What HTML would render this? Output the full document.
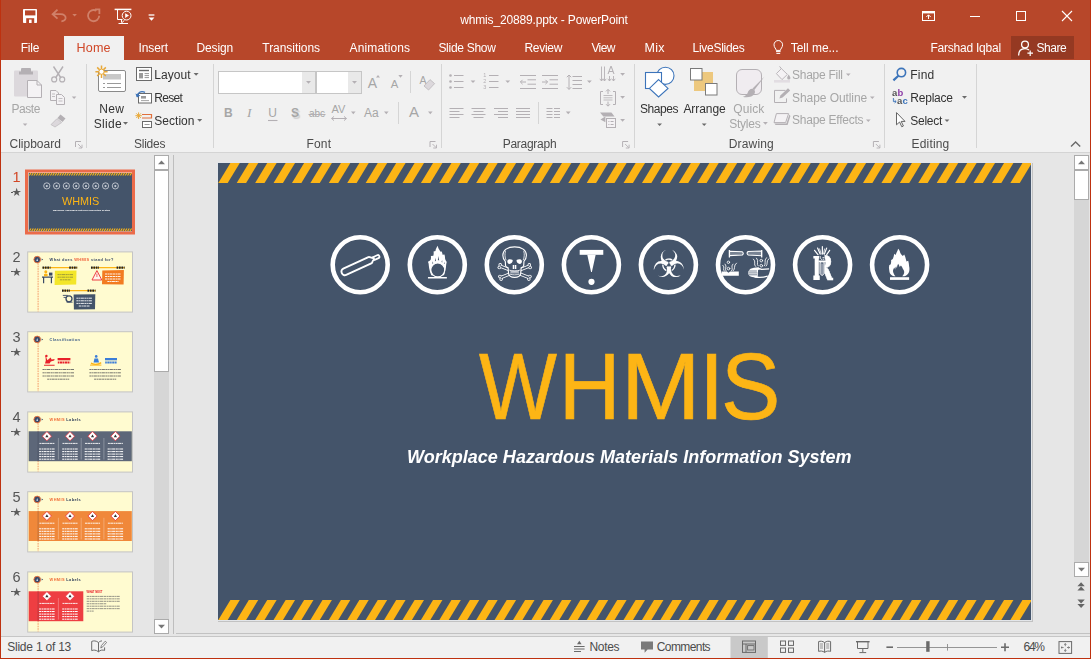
<!DOCTYPE html>
<html><head><meta charset="utf-8"><title>whmis_20889.pptx - PowerPoint</title>
<style>
*{box-sizing:border-box;margin:0;padding:0}
html,body{width:1091px;height:659px;overflow:hidden}
body{position:relative;background:#be310f;font-family:"Liberation Sans",sans-serif;font-size:12px;color:#444}
.a{position:absolute}
.t{position:absolute;white-space:nowrap;line-height:14px}
.w{color:#fff}
.d{color:#a6a6a6}
.k{color:#333}
.g{color:#4c4c4c}
#ribbon{left:1px;top:60px;width:1089px;height:92px;background:#f1f1f1}
#work{left:1px;top:152px;width:1089px;height:484px;background:#e6e6e6;border-top:1px solid #d4d4d4}
#status{left:1px;top:636px;width:1089px;height:22px;background:#f1f1f1;border-top:1px solid #c6c6c6}
.sep{position:absolute;width:1px;background:#d5d5d5;top:64px;height:84px}
svg{position:absolute;overflow:visible}
#whmis span{position:absolute;top:0;transform-origin:0 0;display:block}
.num{position:absolute;left:6px;width:20px;text-align:center;font-size:16px;line-height:18px;color:#555}
.th{position:absolute;left:27px;width:106px;height:61px;border:1px solid #c8c8c8;background:#fffbd0;overflow:hidden}
</style></head><body>
<!-- TITLE BAR -->
<div class="a" style="left:1px;top:0;width:1089px;height:60px;background:#b7472a"></div>
<!-- TABS -->
<div class="a" style="left:64px;top:36px;width:60px;height:25px;background:#f1f1f1"></div>
<div class="a" style="left:1011px;top:36px;width:63px;height:23px;background:#953922"></div>
<!-- RIBBON -->
<div class="a" id="ribbon"></div>
<div class="sep" style="left:86px"></div>
<div class="sep" style="left:213px"></div>
<div class="sep" style="left:441px"></div>
<div class="sep" style="left:634px"></div>
<div class="sep" style="left:884px"></div>
<div class="sep" style="left:976px"></div>
<div class="sep" style="left:410px;top:71px;height:22px"></div>
<div class="sep" style="left:398px;top:102px;height:22px"></div>
<div class="sep" style="left:538px;top:102px;height:22px"></div>
<!-- clipboard -->
<!-- slides -->
<!-- font -->
<div class="a" style="left:218px;top:71px;width:98px;height:23px;background:#fff;border:1px solid #c6c6c6"></div>
<div class="a" style="left:302px;top:72px;width:13px;height:21px;background:#e9e9e9"></div>
<div class="a" style="left:316px;top:71px;width:46px;height:23px;background:#fff;border:1px solid #c6c6c6"></div>
<div class="a" style="left:348px;top:72px;width:13px;height:21px;background:#e9e9e9"></div>
<div class="t d" style="left:367.8px;top:75.8px;font-size:14px">A</div>
<div class="t d" style="left:390.8px;top:77.1px;font-size:11.3px">A</div>
<div class="t d" style="left:419.6px;top:73px;font-size:10.5px">A</div>
<div class="t d" style="left:224px;top:106.3px;font-weight:bold">B</div>
<div class="t d" style="left:247px;top:106px;font-family:'Liberation Serif',serif;font-style:italic;font-size:13.5px">I</div>
<div class="t d" style="left:268.2px;top:106.3px">U</div>
<div class="t d" style="left:291px;top:106.3px;font-weight:bold;text-shadow:1.5px 1.5px 1px #cfcfcf">S</div>
<div class="t d" style="left:309px;top:107px;font-size:10px">abc</div>
<div class="t d" style="left:331.6px;top:101.6px;font-size:11px">AV</div>
<div class="t d" style="left:364px;top:106.3px">Aa</div>
<div class="t d" style="left:409px;top:105.3px;font-size:15px">A</div>
<!-- paragraph -->
<!-- drawing -->
<!-- editing -->
<!-- WORKSPACE -->
<div class="a" id="work"></div>
<svg width="1091" height="659" viewBox="0 0 1091 659" style="left:0;top:0;will-change:transform"><rect x="25" y="169.5" width="110" height="65" fill="#eb6b4a"/>
<rect x="28" y="172.5" width="104" height="59" fill="#fbe3d6"/>
<rect x="28.7" y="173" width="103.3" height="58.2" fill="#44546a"/>
<rect x="27.7" y="251.9" width="104.8" height="60.2" fill="#fffbd0" stroke="#c4c4c4" stroke-width="1"/>
<rect x="27.7" y="331.7" width="104.8" height="60.2" fill="#fffbd0" stroke="#c4c4c4" stroke-width="1"/>
<rect x="27.7" y="411.9" width="104.8" height="60.2" fill="#fffbd0" stroke="#c4c4c4" stroke-width="1"/>
<rect x="27.7" y="491.7" width="104.8" height="60.2" fill="#fffbd0" stroke="#c4c4c4" stroke-width="1"/>
<rect x="27.7" y="571.9" width="104.8" height="60.2" fill="#fffbd0" stroke="#c4c4c4" stroke-width="1"/>
<clipPath id="c1"><rect x="28.7" y="173" width="103.3" height="58.2"/></clipPath><g clip-path="url(#c1)">
<path d="M28.70,175.6 l1.3,0 l1.5,-2.6 l-1.3,0z M31.04,175.6 l1.3,0 l1.5,-2.6 l-1.3,0z M33.38,175.6 l1.3,0 l1.5,-2.6 l-1.3,0z M35.72,175.6 l1.3,0 l1.5,-2.6 l-1.3,0z M38.06,175.6 l1.3,0 l1.5,-2.6 l-1.3,0z M40.40,175.6 l1.3,0 l1.5,-2.6 l-1.3,0z M42.74,175.6 l1.3,0 l1.5,-2.6 l-1.3,0z M45.08,175.6 l1.3,0 l1.5,-2.6 l-1.3,0z M47.42,175.6 l1.3,0 l1.5,-2.6 l-1.3,0z M49.76,175.6 l1.3,0 l1.5,-2.6 l-1.3,0z M52.10,175.6 l1.3,0 l1.5,-2.6 l-1.3,0z M54.44,175.6 l1.3,0 l1.5,-2.6 l-1.3,0z M56.78,175.6 l1.3,0 l1.5,-2.6 l-1.3,0z M59.12,175.6 l1.3,0 l1.5,-2.6 l-1.3,0z M61.46,175.6 l1.3,0 l1.5,-2.6 l-1.3,0z M63.80,175.6 l1.3,0 l1.5,-2.6 l-1.3,0z M66.14,175.6 l1.3,0 l1.5,-2.6 l-1.3,0z M68.48,175.6 l1.3,0 l1.5,-2.6 l-1.3,0z M70.82,175.6 l1.3,0 l1.5,-2.6 l-1.3,0z M73.16,175.6 l1.3,0 l1.5,-2.6 l-1.3,0z M75.50,175.6 l1.3,0 l1.5,-2.6 l-1.3,0z M77.84,175.6 l1.3,0 l1.5,-2.6 l-1.3,0z M80.18,175.6 l1.3,0 l1.5,-2.6 l-1.3,0z M82.52,175.6 l1.3,0 l1.5,-2.6 l-1.3,0z M84.86,175.6 l1.3,0 l1.5,-2.6 l-1.3,0z M87.20,175.6 l1.3,0 l1.5,-2.6 l-1.3,0z M89.54,175.6 l1.3,0 l1.5,-2.6 l-1.3,0z M91.88,175.6 l1.3,0 l1.5,-2.6 l-1.3,0z M94.22,175.6 l1.3,0 l1.5,-2.6 l-1.3,0z M96.56,175.6 l1.3,0 l1.5,-2.6 l-1.3,0z M98.90,175.6 l1.3,0 l1.5,-2.6 l-1.3,0z M101.24,175.6 l1.3,0 l1.5,-2.6 l-1.3,0z M103.58,175.6 l1.3,0 l1.5,-2.6 l-1.3,0z M105.92,175.6 l1.3,0 l1.5,-2.6 l-1.3,0z M108.26,175.6 l1.3,0 l1.5,-2.6 l-1.3,0z M110.60,175.6 l1.3,0 l1.5,-2.6 l-1.3,0z M112.94,175.6 l1.3,0 l1.5,-2.6 l-1.3,0z M115.28,175.6 l1.3,0 l1.5,-2.6 l-1.3,0z M117.62,175.6 l1.3,0 l1.5,-2.6 l-1.3,0z M119.96,175.6 l1.3,0 l1.5,-2.6 l-1.3,0z M122.30,175.6 l1.3,0 l1.5,-2.6 l-1.3,0z M124.64,175.6 l1.3,0 l1.5,-2.6 l-1.3,0z M126.98,175.6 l1.3,0 l1.5,-2.6 l-1.3,0z M129.32,175.6 l1.3,0 l1.5,-2.6 l-1.3,0z M131.66,175.6 l1.3,0 l1.5,-2.6 l-1.3,0z" fill="#fdb515"/>
<path d="M28.70,231.2 l1.3,0 l1.5,-2.6 l-1.3,0z M31.04,231.2 l1.3,0 l1.5,-2.6 l-1.3,0z M33.38,231.2 l1.3,0 l1.5,-2.6 l-1.3,0z M35.72,231.2 l1.3,0 l1.5,-2.6 l-1.3,0z M38.06,231.2 l1.3,0 l1.5,-2.6 l-1.3,0z M40.40,231.2 l1.3,0 l1.5,-2.6 l-1.3,0z M42.74,231.2 l1.3,0 l1.5,-2.6 l-1.3,0z M45.08,231.2 l1.3,0 l1.5,-2.6 l-1.3,0z M47.42,231.2 l1.3,0 l1.5,-2.6 l-1.3,0z M49.76,231.2 l1.3,0 l1.5,-2.6 l-1.3,0z M52.10,231.2 l1.3,0 l1.5,-2.6 l-1.3,0z M54.44,231.2 l1.3,0 l1.5,-2.6 l-1.3,0z M56.78,231.2 l1.3,0 l1.5,-2.6 l-1.3,0z M59.12,231.2 l1.3,0 l1.5,-2.6 l-1.3,0z M61.46,231.2 l1.3,0 l1.5,-2.6 l-1.3,0z M63.80,231.2 l1.3,0 l1.5,-2.6 l-1.3,0z M66.14,231.2 l1.3,0 l1.5,-2.6 l-1.3,0z M68.48,231.2 l1.3,0 l1.5,-2.6 l-1.3,0z M70.82,231.2 l1.3,0 l1.5,-2.6 l-1.3,0z M73.16,231.2 l1.3,0 l1.5,-2.6 l-1.3,0z M75.50,231.2 l1.3,0 l1.5,-2.6 l-1.3,0z M77.84,231.2 l1.3,0 l1.5,-2.6 l-1.3,0z M80.18,231.2 l1.3,0 l1.5,-2.6 l-1.3,0z M82.52,231.2 l1.3,0 l1.5,-2.6 l-1.3,0z M84.86,231.2 l1.3,0 l1.5,-2.6 l-1.3,0z M87.20,231.2 l1.3,0 l1.5,-2.6 l-1.3,0z M89.54,231.2 l1.3,0 l1.5,-2.6 l-1.3,0z M91.88,231.2 l1.3,0 l1.5,-2.6 l-1.3,0z M94.22,231.2 l1.3,0 l1.5,-2.6 l-1.3,0z M96.56,231.2 l1.3,0 l1.5,-2.6 l-1.3,0z M98.90,231.2 l1.3,0 l1.5,-2.6 l-1.3,0z M101.24,231.2 l1.3,0 l1.5,-2.6 l-1.3,0z M103.58,231.2 l1.3,0 l1.5,-2.6 l-1.3,0z M105.92,231.2 l1.3,0 l1.5,-2.6 l-1.3,0z M108.26,231.2 l1.3,0 l1.5,-2.6 l-1.3,0z M110.60,231.2 l1.3,0 l1.5,-2.6 l-1.3,0z M112.94,231.2 l1.3,0 l1.5,-2.6 l-1.3,0z M115.28,231.2 l1.3,0 l1.5,-2.6 l-1.3,0z M117.62,231.2 l1.3,0 l1.5,-2.6 l-1.3,0z M119.96,231.2 l1.3,0 l1.5,-2.6 l-1.3,0z M122.30,231.2 l1.3,0 l1.5,-2.6 l-1.3,0z M124.64,231.2 l1.3,0 l1.5,-2.6 l-1.3,0z M126.98,231.2 l1.3,0 l1.5,-2.6 l-1.3,0z M129.32,231.2 l1.3,0 l1.5,-2.6 l-1.3,0z M131.66,231.2 l1.3,0 l1.5,-2.6 l-1.3,0z" fill="#fdb515"/>
</g>
<circle cx="46.80" cy="185.9" r="3.1" fill="none" stroke="#e8eaee" stroke-width="0.7"/><circle cx="46.80" cy="186.1" r="1.1" fill="#c9ced6"/>
<circle cx="56.59" cy="185.9" r="3.1" fill="none" stroke="#e8eaee" stroke-width="0.7"/><circle cx="56.59" cy="186.1" r="1.1" fill="#c9ced6"/>
<circle cx="66.38" cy="185.9" r="3.1" fill="none" stroke="#e8eaee" stroke-width="0.7"/><circle cx="66.38" cy="186.1" r="1.1" fill="#c9ced6"/>
<circle cx="76.17" cy="185.9" r="3.1" fill="none" stroke="#e8eaee" stroke-width="0.7"/><circle cx="76.17" cy="186.1" r="1.1" fill="#c9ced6"/>
<circle cx="85.96" cy="185.9" r="3.1" fill="none" stroke="#e8eaee" stroke-width="0.7"/><circle cx="85.96" cy="186.1" r="1.1" fill="#c9ced6"/>
<circle cx="95.75" cy="185.9" r="3.1" fill="none" stroke="#e8eaee" stroke-width="0.7"/><circle cx="95.75" cy="186.1" r="1.1" fill="#c9ced6"/>
<circle cx="105.54" cy="185.9" r="3.1" fill="none" stroke="#e8eaee" stroke-width="0.7"/><circle cx="105.54" cy="186.1" r="1.1" fill="#c9ced6"/>
<circle cx="115.33" cy="185.9" r="3.1" fill="none" stroke="#e8eaee" stroke-width="0.7"/><circle cx="115.33" cy="186.1" r="1.1" fill="#c9ced6"/>
<text x="80.6" y="205.3" text-anchor="middle" font-family="Liberation Sans,sans-serif" font-size="11.4" fill="#fdb515" textLength="37.4" lengthAdjust="spacingAndGlyphs">WHMIS</text>
<text x="81.4" y="210.9" text-anchor="middle" font-family="Liberation Sans,sans-serif" font-size="2.35" font-weight="bold" font-style="italic" fill="#fff">Workplace Hazardous Materials Information System</text>
<path d="M38.1,263.20000000000005 V311.4" stroke="#f0703a" stroke-width="0.7" stroke-dasharray="1.6,0.9"/>
<circle cx="37.2" cy="259.6" r="3.3" fill="#3a4a66" stroke="#f0703a" stroke-width="0.9"/><path d="M36.3,261.0 h1.8 l-0.9,-2.8z" fill="#cfe0ff"/><path d="M41.6,258.6 l1.6,1 l-1.6,1z" fill="#3a4a66"/>
<text x="49.6" y="261.0" font-family="Liberation Sans,sans-serif" font-size="3.9" font-weight="bold" letter-spacing="0.38"><tspan fill="#3a4a66">What does </tspan><tspan fill="#f0603a">WHMIS </tspan><tspan fill="#3a4a66">stand for?</tspan></text>
<path d="M42.5,267.7 h34.7" stroke="#fdb515" stroke-width="1.3"/><path d="M42.5,267.7 h8 M69.2,267.7 h8" stroke="#222" stroke-width="2.2" stroke-dasharray="1.7,0.7"/>
<path d="M91,267.7 h33.6" stroke="#fdb515" stroke-width="1.3"/><path d="M91,267.7 h8 M116.6,267.7 h8" stroke="#222" stroke-width="2.2" stroke-dasharray="1.7,0.7"/>
<path d="M62,290.7 h33.5" stroke="#fdb515" stroke-width="1.3"/><path d="M62,290.7 h8 M87.5,290.7 h8" stroke="#222" stroke-width="2.2" stroke-dasharray="1.7,0.7"/>
<path d="M54.9,270.8 L76.5,270.4 L76.2,284.4 L54.6,284.9Z" fill="#f3e62a"/>
<path d="M57.5,274.6 h16.0" stroke="#8a8a3a" stroke-width="0.8" stroke-dasharray="2.2,0.5,1.4,0.4,3,0.5"/>
<path d="M57.5,277.2 h16.0" stroke="#8a8a3a" stroke-width="0.8" stroke-dasharray="2.2,0.5,1.4,0.4,3,0.5"/>
<path d="M59.9,279.8 h11.2" stroke="#8a8a3a" stroke-width="0.8" stroke-dasharray="2.2,0.5,1.4,0.4,3,0.5"/>
<path d="M42,276.4 h11 v1.3 h-1 v5.6 h-1.2 v-5.6 h-6.6 v5.6 h-1.2 v-5.6 h-1z" fill="#3a4a66"/><circle cx="45.8" cy="271.8" r="1.5" fill="#fdb515"/><path d="M44,276.2 v-2 q1.8,-1.6 3.6,0 v2z" fill="#fdb515"/><rect x="49" y="272.6" width="3.4" height="3" fill="#3a4a66"/>
<path d="M96.9,270.6 L101.8,280 H92 Z" fill="#fff3ea" stroke="#ee3e42" stroke-width="1"/><path d="M96.9,273.6 v3.4" stroke="#ee3e42" stroke-width="0.8"/>
<path d="M102.3,270.4 L123.9,270 L123.6,284.6 L102,284.2Z" fill="#f27b21"/>
<path d="M105.0,274.0 h16.0" stroke="#fff" stroke-width="0.9" stroke-dasharray="2.2,0.5,1.4,0.4,3,0.5"/>
<path d="M105.0,276.5 h16.0" stroke="#fff" stroke-width="0.9" stroke-dasharray="2.2,0.5,1.4,0.4,3,0.5"/>
<path d="M105.0,279.0 h16.0" stroke="#fff" stroke-width="0.9" stroke-dasharray="2.2,0.5,1.4,0.4,3,0.5"/>
<path d="M107.4,281.5 h11.2" stroke="#fff" stroke-width="0.9" stroke-dasharray="2.2,0.5,1.4,0.4,3,0.5"/>
<path d="M73.6,294.6 L95.3,294.2 L95,309.2 L73.9,309.5Z" fill="#44546a"/>
<path d="M76.4,298.2 h16.0" stroke="#fff" stroke-width="0.9" stroke-dasharray="2.2,0.5,1.4,0.4,3,0.5"/>
<path d="M76.4,300.8 h16.0" stroke="#fff" stroke-width="0.9" stroke-dasharray="2.2,0.5,1.4,0.4,3,0.5"/>
<path d="M76.4,303.4 h16.0" stroke="#fff" stroke-width="0.9" stroke-dasharray="2.2,0.5,1.4,0.4,3,0.5"/>
<path d="M78.8,306.0 h11.2" stroke="#fff" stroke-width="0.9" stroke-dasharray="2.2,0.5,1.4,0.4,3,0.5"/>
<circle cx="69" cy="298.8" r="3" fill="none" stroke="#3a4a66" stroke-width="1.3"/><path d="M62.8,295.4 h5 M63.6,297.4 h3 M66.6,302.2 h6" stroke="#3a4a66" stroke-width="0.9"/>
<path d="M38.1,343.0 V391.2" stroke="#f0703a" stroke-width="0.7" stroke-dasharray="1.6,0.9"/>
<circle cx="37.2" cy="339.4" r="3.3" fill="#3a4a66" stroke="#f0703a" stroke-width="0.9"/><path d="M36.3,340.79999999999995 h1.8 l-0.9,-2.8z" fill="#cfe0ff"/><path d="M41.6,338.4 l1.6,1 l-1.6,1z" fill="#3a4a66"/>
<text x="49.6" y="340.79999999999995" font-family="Liberation Sans,sans-serif" font-size="3.9" font-weight="bold" letter-spacing="0.38"><tspan fill="#3a5a86">Classification</tspan></text>
<path d="M44,364.8 h10.6 v0.9 h-10.6z M45.4,355.2 l2,5 l3.2,-2.6 l1,2 l3,-0.6 l-0.4,1.6 l-3.4,1 l-1.2,2 h-4.6 l0.8,-3z" fill="#e8202a"/><circle cx="46.4" cy="356" r="1.2" fill="#e8202a"/>
<rect x="57.6" y="358" width="12.8" height="2.3" fill="#e8202a"/><path d="M57.8,362.4 h12.4" stroke="#e8202a" stroke-width="2" stroke-dasharray="1.6,0.5,2.4,0.4"/>
<path d="M90,364.6 h11.4 v1 h-11.4z" fill="#fdb515"/><path d="M91,362.6 q5,2.4 10,-0.6 l0.4,1.4 q-5,3 -10.6,0.6z" fill="#fdb515"/><path d="M94.4,358.4 h3.6 l1,4 h-5.4z" fill="#3b7dd8"/><circle cx="96.2" cy="356.4" r="1.3" fill="#3b7dd8"/>
<rect x="105" y="358" width="12" height="2.3" fill="#3b7dd8"/><path d="M105.2,362.4 h11.6" stroke="#3b7dd8" stroke-width="2" stroke-dasharray="1.6,0.5,2.4,0.4"/>
<path d="M42.5,369.5 h31.5" stroke="#555" stroke-width="0.8" stroke-dasharray="2.2,0.5,1.4,0.4,3,0.5"/>
<path d="M42.5,372.8 h31.5" stroke="#555" stroke-width="0.8" stroke-dasharray="2.2,0.5,1.4,0.4,3,0.5"/>
<path d="M42.5,376.0 h31.5" stroke="#555" stroke-width="0.8" stroke-dasharray="2.2,0.5,1.4,0.4,3,0.5"/>
<path d="M47.2,379.2 h22.0" stroke="#555" stroke-width="0.8" stroke-dasharray="2.2,0.5,1.4,0.4,3,0.5"/>
<path d="M89.4,369.5 h31.6" stroke="#555" stroke-width="0.8" stroke-dasharray="2.2,0.5,1.4,0.4,3,0.5"/>
<path d="M89.4,372.8 h31.6" stroke="#555" stroke-width="0.8" stroke-dasharray="2.2,0.5,1.4,0.4,3,0.5"/>
<path d="M89.4,376.0 h31.6" stroke="#555" stroke-width="0.8" stroke-dasharray="2.2,0.5,1.4,0.4,3,0.5"/>
<path d="M94.1,379.2 h22.1" stroke="#555" stroke-width="0.8" stroke-dasharray="2.2,0.5,1.4,0.4,3,0.5"/>
<path d="M38.1,423.2 V471.4" stroke="#f0703a" stroke-width="0.7" stroke-dasharray="1.6,0.9"/>
<circle cx="37.2" cy="419.59999999999997" r="3.3" fill="#3a4a66" stroke="#f0703a" stroke-width="0.9"/><path d="M36.3,420.99999999999994 h1.8 l-0.9,-2.8z" fill="#cfe0ff"/><path d="M41.6,418.59999999999997 l1.6,1 l-1.6,1z" fill="#3a4a66"/>
<text x="49.6" y="420.99999999999994" font-family="Liberation Sans,sans-serif" font-size="3.9" font-weight="bold" letter-spacing="0.38"><tspan fill="#f0703a">WHMIS </tspan><tspan fill="#2a3a56">Labels</tspan></text>
<rect x="28.7" y="431.29999999999995" width="103.10000000000001" height="29.9" fill="#5d6779"/>
<path d="M38.1,431.29999999999995 v29.9" stroke="#2a2a3a" stroke-opacity="0.35" stroke-width="0.7"/>
<path d="M46.9,431.59999999999997 l4.6,4.6 l-4.6,4.6 l-4.6,-4.6z" fill="#fff" stroke="#e8303a" stroke-width="0.8"/><path d="M45.3,437.2 l1.6,-2.8 l1.6,2.8z" fill="#333"/>
<path d="M39.4,443.4 h15" stroke="#fff" stroke-width="0.9" stroke-dasharray="2,0.4,3,0.4,1.6,0.4"/>
<path d="M39.1,449.0 h15.6" stroke="#fff" stroke-width="1.0" stroke-dasharray="2.2,0.5,1.4,0.4,3,0.5"/>
<path d="M39.1,451.6 h15.6" stroke="#fff" stroke-width="1.0" stroke-dasharray="2.2,0.5,1.4,0.4,3,0.5"/>
<path d="M39.1,454.1 h15.6" stroke="#fff" stroke-width="1.0" stroke-dasharray="2.2,0.5,1.4,0.4,3,0.5"/>
<path d="M39.1,456.6 h15.6" stroke="#fff" stroke-width="1.0" stroke-dasharray="2.2,0.5,1.4,0.4,3,0.5"/>
<path d="M39.1,459.2 h15.6" stroke="#fff" stroke-width="1.0" stroke-dasharray="2.2,0.5,1.4,0.4,3,0.5"/>
<path d="M58.4,438.0 v21.6" stroke="#fff" stroke-opacity="0.55" stroke-width="0.5"/>
<path d="M70,431.59999999999997 l4.6,4.6 l-4.6,4.6 l-4.6,-4.6z" fill="#fff" stroke="#e8303a" stroke-width="0.8"/><path d="M68.4,437.2 l1.6,-2.8 l1.6,2.8z" fill="#333"/>
<path d="M62.5,443.4 h15" stroke="#fff" stroke-width="0.9" stroke-dasharray="2,0.4,3,0.4,1.6,0.4"/>
<path d="M62.2,449.0 h15.6" stroke="#fff" stroke-width="1.0" stroke-dasharray="2.2,0.5,1.4,0.4,3,0.5"/>
<path d="M62.2,451.6 h15.6" stroke="#fff" stroke-width="1.0" stroke-dasharray="2.2,0.5,1.4,0.4,3,0.5"/>
<path d="M62.2,454.1 h15.6" stroke="#fff" stroke-width="1.0" stroke-dasharray="2.2,0.5,1.4,0.4,3,0.5"/>
<path d="M62.2,456.6 h15.6" stroke="#fff" stroke-width="1.0" stroke-dasharray="2.2,0.5,1.4,0.4,3,0.5"/>
<path d="M62.2,459.2 h15.6" stroke="#fff" stroke-width="1.0" stroke-dasharray="2.2,0.5,1.4,0.4,3,0.5"/>
<path d="M81.2,438.0 v21.6" stroke="#fff" stroke-opacity="0.55" stroke-width="0.5"/>
<path d="M92.5,431.59999999999997 l4.6,4.6 l-4.6,4.6 l-4.6,-4.6z" fill="#fff" stroke="#e8303a" stroke-width="0.8"/><path d="M90.9,437.2 l1.6,-2.8 l1.6,2.8z" fill="#333"/>
<path d="M85.0,443.4 h15" stroke="#fff" stroke-width="0.9" stroke-dasharray="2,0.4,3,0.4,1.6,0.4"/>
<path d="M84.7,449.0 h15.6" stroke="#fff" stroke-width="1.0" stroke-dasharray="2.2,0.5,1.4,0.4,3,0.5"/>
<path d="M84.7,451.6 h15.6" stroke="#fff" stroke-width="1.0" stroke-dasharray="2.2,0.5,1.4,0.4,3,0.5"/>
<path d="M84.7,454.1 h15.6" stroke="#fff" stroke-width="1.0" stroke-dasharray="2.2,0.5,1.4,0.4,3,0.5"/>
<path d="M84.7,456.6 h15.6" stroke="#fff" stroke-width="1.0" stroke-dasharray="2.2,0.5,1.4,0.4,3,0.5"/>
<path d="M84.7,459.2 h15.6" stroke="#fff" stroke-width="1.0" stroke-dasharray="2.2,0.5,1.4,0.4,3,0.5"/>
<path d="M103.9,438.0 v21.6" stroke="#fff" stroke-opacity="0.55" stroke-width="0.5"/>
<path d="M115.4,431.59999999999997 l4.6,4.6 l-4.6,4.6 l-4.6,-4.6z" fill="#fff" stroke="#e8303a" stroke-width="0.8"/><path d="M113.80000000000001,437.2 l1.6,-2.8 l1.6,2.8z" fill="#333"/>
<path d="M107.9,443.4 h15" stroke="#fff" stroke-width="0.9" stroke-dasharray="2,0.4,3,0.4,1.6,0.4"/>
<path d="M107.6,449.0 h15.6" stroke="#fff" stroke-width="1.0" stroke-dasharray="2.2,0.5,1.4,0.4,3,0.5"/>
<path d="M107.6,451.6 h15.6" stroke="#fff" stroke-width="1.0" stroke-dasharray="2.2,0.5,1.4,0.4,3,0.5"/>
<path d="M107.6,454.1 h15.6" stroke="#fff" stroke-width="1.0" stroke-dasharray="2.2,0.5,1.4,0.4,3,0.5"/>
<path d="M107.6,456.6 h15.6" stroke="#fff" stroke-width="1.0" stroke-dasharray="2.2,0.5,1.4,0.4,3,0.5"/>
<path d="M107.6,459.2 h15.6" stroke="#fff" stroke-width="1.0" stroke-dasharray="2.2,0.5,1.4,0.4,3,0.5"/>
<path d="M38.1,503.0 V551.2" stroke="#f0703a" stroke-width="0.7" stroke-dasharray="1.6,0.9"/>
<circle cx="37.2" cy="499.4" r="3.3" fill="#3a4a66" stroke="#f0703a" stroke-width="0.9"/><path d="M36.3,500.79999999999995 h1.8 l-0.9,-2.8z" fill="#cfe0ff"/><path d="M41.6,498.4 l1.6,1 l-1.6,1z" fill="#3a4a66"/>
<text x="49.6" y="500.79999999999995" font-family="Liberation Sans,sans-serif" font-size="3.9" font-weight="bold" letter-spacing="0.38"><tspan fill="#f0703a">WHMIS </tspan><tspan fill="#2a3a56">Labels</tspan></text>
<rect x="28.7" y="511.09999999999997" width="103.10000000000001" height="29.9" fill="#f0883a"/>
<path d="M38.1,511.09999999999997 v29.9" stroke="#2a2a3a" stroke-opacity="0.35" stroke-width="0.7"/>
<path d="M46.9,511.4 l4.6,4.6 l-4.6,4.6 l-4.6,-4.6z" fill="#fff" stroke="#e8303a" stroke-width="0.8"/><path d="M45.3,517.0 l1.6,-2.8 l1.6,2.8z" fill="#333"/>
<path d="M39.4,523.2 h15" stroke="#fff" stroke-width="0.9" stroke-dasharray="2,0.4,3,0.4,1.6,0.4"/>
<path d="M39.1,528.8 h15.6" stroke="#fff" stroke-width="1.0" stroke-dasharray="2.2,0.5,1.4,0.4,3,0.5"/>
<path d="M39.1,531.3 h15.6" stroke="#fff" stroke-width="1.0" stroke-dasharray="2.2,0.5,1.4,0.4,3,0.5"/>
<path d="M39.1,533.9 h15.6" stroke="#fff" stroke-width="1.0" stroke-dasharray="2.2,0.5,1.4,0.4,3,0.5"/>
<path d="M39.1,536.4 h15.6" stroke="#fff" stroke-width="1.0" stroke-dasharray="2.2,0.5,1.4,0.4,3,0.5"/>
<path d="M39.1,539.0 h15.6" stroke="#fff" stroke-width="1.0" stroke-dasharray="2.2,0.5,1.4,0.4,3,0.5"/>
<path d="M58.4,517.8 v21.6" stroke="#fff" stroke-opacity="0.55" stroke-width="0.5"/>
<path d="M70,511.4 l4.6,4.6 l-4.6,4.6 l-4.6,-4.6z" fill="#fff" stroke="#e8303a" stroke-width="0.8"/><path d="M68.4,517.0 l1.6,-2.8 l1.6,2.8z" fill="#333"/>
<path d="M62.5,523.2 h15" stroke="#fff" stroke-width="0.9" stroke-dasharray="2,0.4,3,0.4,1.6,0.4"/>
<path d="M62.2,528.8 h15.6" stroke="#fff" stroke-width="1.0" stroke-dasharray="2.2,0.5,1.4,0.4,3,0.5"/>
<path d="M62.2,531.3 h15.6" stroke="#fff" stroke-width="1.0" stroke-dasharray="2.2,0.5,1.4,0.4,3,0.5"/>
<path d="M62.2,533.9 h15.6" stroke="#fff" stroke-width="1.0" stroke-dasharray="2.2,0.5,1.4,0.4,3,0.5"/>
<path d="M62.2,536.4 h15.6" stroke="#fff" stroke-width="1.0" stroke-dasharray="2.2,0.5,1.4,0.4,3,0.5"/>
<path d="M62.2,539.0 h15.6" stroke="#fff" stroke-width="1.0" stroke-dasharray="2.2,0.5,1.4,0.4,3,0.5"/>
<path d="M81.2,517.8 v21.6" stroke="#fff" stroke-opacity="0.55" stroke-width="0.5"/>
<path d="M92.5,511.4 l4.6,4.6 l-4.6,4.6 l-4.6,-4.6z" fill="#fff" stroke="#e8303a" stroke-width="0.8"/><path d="M90.9,517.0 l1.6,-2.8 l1.6,2.8z" fill="#333"/>
<path d="M85.0,523.2 h15" stroke="#fff" stroke-width="0.9" stroke-dasharray="2,0.4,3,0.4,1.6,0.4"/>
<path d="M84.7,528.8 h15.6" stroke="#fff" stroke-width="1.0" stroke-dasharray="2.2,0.5,1.4,0.4,3,0.5"/>
<path d="M84.7,531.3 h15.6" stroke="#fff" stroke-width="1.0" stroke-dasharray="2.2,0.5,1.4,0.4,3,0.5"/>
<path d="M84.7,533.9 h15.6" stroke="#fff" stroke-width="1.0" stroke-dasharray="2.2,0.5,1.4,0.4,3,0.5"/>
<path d="M84.7,536.4 h15.6" stroke="#fff" stroke-width="1.0" stroke-dasharray="2.2,0.5,1.4,0.4,3,0.5"/>
<path d="M84.7,539.0 h15.6" stroke="#fff" stroke-width="1.0" stroke-dasharray="2.2,0.5,1.4,0.4,3,0.5"/>
<path d="M103.9,517.8 v21.6" stroke="#fff" stroke-opacity="0.55" stroke-width="0.5"/>
<path d="M115.4,511.4 l4.6,4.6 l-4.6,4.6 l-4.6,-4.6z" fill="#fff" stroke="#e8303a" stroke-width="0.8"/><path d="M113.80000000000001,517.0 l1.6,-2.8 l1.6,2.8z" fill="#333"/>
<path d="M107.9,523.2 h15" stroke="#fff" stroke-width="0.9" stroke-dasharray="2,0.4,3,0.4,1.6,0.4"/>
<path d="M107.6,528.8 h15.6" stroke="#fff" stroke-width="1.0" stroke-dasharray="2.2,0.5,1.4,0.4,3,0.5"/>
<path d="M107.6,531.3 h15.6" stroke="#fff" stroke-width="1.0" stroke-dasharray="2.2,0.5,1.4,0.4,3,0.5"/>
<path d="M107.6,533.9 h15.6" stroke="#fff" stroke-width="1.0" stroke-dasharray="2.2,0.5,1.4,0.4,3,0.5"/>
<path d="M107.6,536.4 h15.6" stroke="#fff" stroke-width="1.0" stroke-dasharray="2.2,0.5,1.4,0.4,3,0.5"/>
<path d="M107.6,539.0 h15.6" stroke="#fff" stroke-width="1.0" stroke-dasharray="2.2,0.5,1.4,0.4,3,0.5"/>
<path d="M38.1,583.2 V631.4" stroke="#f0703a" stroke-width="0.7" stroke-dasharray="1.6,0.9"/>
<circle cx="37.2" cy="579.6" r="3.3" fill="#3a4a66" stroke="#f0703a" stroke-width="0.9"/><path d="M36.3,581.0 h1.8 l-0.9,-2.8z" fill="#cfe0ff"/><path d="M41.6,578.6 l1.6,1 l-1.6,1z" fill="#3a4a66"/>
<text x="49.6" y="581.0" font-family="Liberation Sans,sans-serif" font-size="3.9" font-weight="bold" letter-spacing="0.38"><tspan fill="#f0703a">WHMIS </tspan><tspan fill="#2a3a56">Labels</tspan></text>
<rect x="28.7" y="591.3" width="54.599999999999994" height="29.9" fill="#ee3e42"/>
<path d="M38.1,591.3 v29.9" stroke="#2a2a3a" stroke-opacity="0.35" stroke-width="0.7"/>
<path d="M46.9,591.5999999999999 l4.6,4.6 l-4.6,4.6 l-4.6,-4.6z" fill="#fff" stroke="#e8303a" stroke-width="0.8"/><path d="M45.3,597.1999999999999 l1.6,-2.8 l1.6,2.8z" fill="#333"/>
<path d="M39.4,603.4 h15" stroke="#fff" stroke-width="0.9" stroke-dasharray="2,0.4,3,0.4,1.6,0.4"/>
<path d="M39.1,609.0 h15.6" stroke="#fff" stroke-width="1.0" stroke-dasharray="2.2,0.5,1.4,0.4,3,0.5"/>
<path d="M39.1,611.5 h15.6" stroke="#fff" stroke-width="1.0" stroke-dasharray="2.2,0.5,1.4,0.4,3,0.5"/>
<path d="M39.1,614.1 h15.6" stroke="#fff" stroke-width="1.0" stroke-dasharray="2.2,0.5,1.4,0.4,3,0.5"/>
<path d="M39.1,616.6 h15.6" stroke="#fff" stroke-width="1.0" stroke-dasharray="2.2,0.5,1.4,0.4,3,0.5"/>
<path d="M39.1,619.2 h15.6" stroke="#fff" stroke-width="1.0" stroke-dasharray="2.2,0.5,1.4,0.4,3,0.5"/>
<path d="M58.4,598.0 v21.6" stroke="#fff" stroke-opacity="0.55" stroke-width="0.5"/>
<path d="M70,591.5999999999999 l4.6,4.6 l-4.6,4.6 l-4.6,-4.6z" fill="#fff" stroke="#e8303a" stroke-width="0.8"/><path d="M68.4,597.1999999999999 l1.6,-2.8 l1.6,2.8z" fill="#333"/>
<path d="M62.5,603.4 h15" stroke="#fff" stroke-width="0.9" stroke-dasharray="2,0.4,3,0.4,1.6,0.4"/>
<path d="M62.2,609.0 h15.6" stroke="#fff" stroke-width="1.0" stroke-dasharray="2.2,0.5,1.4,0.4,3,0.5"/>
<path d="M62.2,611.5 h15.6" stroke="#fff" stroke-width="1.0" stroke-dasharray="2.2,0.5,1.4,0.4,3,0.5"/>
<path d="M62.2,614.1 h15.6" stroke="#fff" stroke-width="1.0" stroke-dasharray="2.2,0.5,1.4,0.4,3,0.5"/>
<path d="M62.2,616.6 h15.6" stroke="#fff" stroke-width="1.0" stroke-dasharray="2.2,0.5,1.4,0.4,3,0.5"/>
<path d="M62.2,619.2 h15.6" stroke="#fff" stroke-width="1.0" stroke-dasharray="2.2,0.5,1.4,0.4,3,0.5"/>
<text x="86.6" y="593.3" font-family="Liberation Sans,sans-serif" font-size="2.7" font-weight="bold" fill="#e8202a">WHAT NEXT</text>
<path d="M86.7,596.40 h33" stroke="#666" stroke-width="0.7" stroke-dasharray="2.4,0.5,1.5,0.4,3.2,0.5"/>
<path d="M86.7,598.85 h33" stroke="#666" stroke-width="0.7" stroke-dasharray="2.4,0.5,1.5,0.4,3.2,0.5"/>
<path d="M86.7,601.30 h33" stroke="#666" stroke-width="0.7" stroke-dasharray="2.4,0.5,1.5,0.4,3.2,0.5"/>
<path d="M86.7,603.75 h20" stroke="#666" stroke-width="0.7" stroke-dasharray="2.4,0.5,1.5,0.4,3.2,0.5"/>
<path d="M86.7,606.20 h33" stroke="#666" stroke-width="0.7" stroke-dasharray="2.4,0.5,1.5,0.4,3.2,0.5"/>
<path d="M86.7,608.65 h33" stroke="#666" stroke-width="0.7" stroke-dasharray="2.4,0.5,1.5,0.4,3.2,0.5"/>
<path d="M86.7,611.10 h7" stroke="#666" stroke-width="0.7" stroke-dasharray="2.4,0.5,1.5,0.4,3.2,0.5"/>
<rect x="154" y="155" width="15" height="479" fill="#d6d6d6"/>
<rect x="154.5" y="155.5" width="14" height="14" fill="#fff" stroke="#ababab"/>
<path d="M158,164.2 h7 l-3.5,-3.8z" fill="#777"/>
<rect x="154.5" y="170.5" width="14" height="201" fill="#fff" stroke="#ababab"/>
<rect x="154.5" y="619.5" width="14" height="14" fill="#fff" stroke="#ababab"/>
<path d="M158,624.8 h7 l-3.5,3.8z" fill="#777"/>
<path d="M173.5,155 V634" stroke="#bebebe"/><path d="M176,633.5 H1090" stroke="#c2c2c2"/>
<rect x="1074" y="155" width="15" height="422" fill="#d6d6d6"/>
<rect x="1074.5" y="155.5" width="14" height="14" fill="#fff" stroke="#ababab"/>
<path d="M1078,164.2 h7 l-3.5,-3.8z" fill="#777"/>
<rect x="1074.5" y="170.5" width="14" height="29" fill="#fff" stroke="#ababab"/>
<rect x="1074.5" y="562.5" width="14" height="14" fill="#fff" stroke="#ababab"/>
<path d="M1078,567.8 h7 l-3.5,3.8z" fill="#777"/>
<path d="M1077.4,586.2 h7.4 l-3.7,-4z M1077.4,590.6 h7.4 l-3.7,-4z" fill="#666"/><path d="M1077.4,599.6 h7.4 l-3.7,4z M1077.4,604 h7.4 l-3.7,4z" fill="#666"/></svg>
<div class="t" style="left:6px;width:21px;text-align:center;top:168.1px;font-size:14.5px;line-height:18px;color:#d24726">1</div>
<div class="t" style="left:11.4px;top:185.3px;font-family:'DejaVu Sans',sans-serif;font-size:11.5px;line-height:14px;color:#5a5a5a">★</div>
<div class="a" style="left:10.5px;top:191.7px;width:2px;height:1px;background:#5a5a5a"></div>
<div class="t" style="left:6px;width:21px;text-align:center;top:247.8px;font-size:14.5px;line-height:18px;color:#555">2</div>
<div class="t" style="left:11.4px;top:265.0px;font-family:'DejaVu Sans',sans-serif;font-size:11.5px;line-height:14px;color:#5a5a5a">★</div>
<div class="a" style="left:10.5px;top:271.4px;width:2px;height:1px;background:#5a5a5a"></div>
<div class="t" style="left:6px;width:21px;text-align:center;top:327.6px;font-size:14.5px;line-height:18px;color:#555">3</div>
<div class="t" style="left:11.4px;top:344.8px;font-family:'DejaVu Sans',sans-serif;font-size:11.5px;line-height:14px;color:#5a5a5a">★</div>
<div class="a" style="left:10.5px;top:351.2px;width:2px;height:1px;background:#5a5a5a"></div>
<div class="t" style="left:6px;width:21px;text-align:center;top:407.8px;font-size:14.5px;line-height:18px;color:#555">4</div>
<div class="t" style="left:11.4px;top:425.0px;font-family:'DejaVu Sans',sans-serif;font-size:11.5px;line-height:14px;color:#5a5a5a">★</div>
<div class="a" style="left:10.5px;top:431.4px;width:2px;height:1px;background:#5a5a5a"></div>
<div class="t" style="left:6px;width:21px;text-align:center;top:487.6px;font-size:14.5px;line-height:18px;color:#555">5</div>
<div class="t" style="left:11.4px;top:504.8px;font-family:'DejaVu Sans',sans-serif;font-size:11.5px;line-height:14px;color:#5a5a5a">★</div>
<div class="a" style="left:10.5px;top:511.2px;width:2px;height:1px;background:#5a5a5a"></div>
<div class="t" style="left:6px;width:21px;text-align:center;top:567.8px;font-size:14.5px;line-height:18px;color:#555">6</div>
<div class="t" style="left:11.4px;top:585.0px;font-family:'DejaVu Sans',sans-serif;font-size:11.5px;line-height:14px;color:#5a5a5a">★</div>
<div class="a" style="left:10.5px;top:591.4px;width:2px;height:1px;background:#5a5a5a"></div>
<!-- SLIDE -->
<div class="a" style="left:218px;top:163px;width:815px;height:459px;background:#c2c2c2"></div><div class="a" style="left:217px;top:162px;width:815px;height:459px;background:#e3e6ea"></div><div class="a" id="slide" style="left:218px;top:163px;width:813px;height:457px;background:#44546a;overflow:hidden">
<svg width="813" height="457" viewBox="0 0 813 457" style="left:0;top:0;will-change:transform">
<g fill="#fdb515"><polygon points="0.30,20 9.70,20 21.80,0 12.40,0"/><polygon points="18.72,20 28.12,20 40.22,0 30.82,0"/><polygon points="37.14,20 46.54,20 58.64,0 49.24,0"/><polygon points="55.56,20 64.96,20 77.06,0 67.66,0"/><polygon points="73.98,20 83.38,20 95.48,0 86.08,0"/><polygon points="92.40,20 101.80,20 113.90,0 104.50,0"/><polygon points="110.82,20 120.22,20 132.32,0 122.92,0"/><polygon points="129.24,20 138.64,20 150.74,0 141.34,0"/><polygon points="147.66,20 157.06,20 169.16,0 159.76,0"/><polygon points="166.08,20 175.48,20 187.58,0 178.18,0"/><polygon points="184.50,20 193.90,20 206.00,0 196.60,0"/><polygon points="202.92,20 212.32,20 224.42,0 215.02,0"/><polygon points="221.34,20 230.74,20 242.84,0 233.44,0"/><polygon points="239.76,20 249.16,20 261.26,0 251.86,0"/><polygon points="258.18,20 267.58,20 279.68,0 270.28,0"/><polygon points="276.60,20 286.00,20 298.10,0 288.70,0"/><polygon points="295.02,20 304.42,20 316.52,0 307.12,0"/><polygon points="313.44,20 322.84,20 334.94,0 325.54,0"/><polygon points="331.86,20 341.26,20 353.36,0 343.96,0"/><polygon points="350.28,20 359.68,20 371.78,0 362.38,0"/><polygon points="368.70,20 378.10,20 390.20,0 380.80,0"/><polygon points="387.12,20 396.52,20 408.62,0 399.22,0"/><polygon points="405.54,20 414.94,20 427.04,0 417.64,0"/><polygon points="423.96,20 433.36,20 445.46,0 436.06,0"/><polygon points="442.38,20 451.78,20 463.88,0 454.48,0"/><polygon points="460.80,20 470.20,20 482.30,0 472.90,0"/><polygon points="479.22,20 488.62,20 500.72,0 491.32,0"/><polygon points="497.64,20 507.04,20 519.14,0 509.74,0"/><polygon points="516.06,20 525.46,20 537.56,0 528.16,0"/><polygon points="534.48,20 543.88,20 555.98,0 546.58,0"/><polygon points="552.90,20 562.30,20 574.40,0 565.00,0"/><polygon points="571.32,20 580.72,20 592.82,0 583.42,0"/><polygon points="589.74,20 599.14,20 611.24,0 601.84,0"/><polygon points="608.16,20 617.56,20 629.66,0 620.26,0"/><polygon points="626.58,20 635.98,20 648.08,0 638.68,0"/><polygon points="645.00,20 654.40,20 666.50,0 657.10,0"/><polygon points="663.42,20 672.82,20 684.92,0 675.52,0"/><polygon points="681.84,20 691.24,20 703.34,0 693.94,0"/><polygon points="700.26,20 709.66,20 721.76,0 712.36,0"/><polygon points="718.68,20 728.08,20 740.18,0 730.78,0"/><polygon points="737.10,20 746.50,20 758.60,0 749.20,0"/><polygon points="755.52,20 764.92,20 777.02,0 767.62,0"/><polygon points="773.94,20 783.34,20 795.44,0 786.04,0"/><polygon points="792.36,20 801.76,20 813.86,0 804.46,0"/><polygon points="0.30,457 9.70,457 21.80,437 12.40,437"/><polygon points="18.72,457 28.12,457 40.22,437 30.82,437"/><polygon points="37.14,457 46.54,457 58.64,437 49.24,437"/><polygon points="55.56,457 64.96,457 77.06,437 67.66,437"/><polygon points="73.98,457 83.38,457 95.48,437 86.08,437"/><polygon points="92.40,457 101.80,457 113.90,437 104.50,437"/><polygon points="110.82,457 120.22,457 132.32,437 122.92,437"/><polygon points="129.24,457 138.64,457 150.74,437 141.34,437"/><polygon points="147.66,457 157.06,457 169.16,437 159.76,437"/><polygon points="166.08,457 175.48,457 187.58,437 178.18,437"/><polygon points="184.50,457 193.90,457 206.00,437 196.60,437"/><polygon points="202.92,457 212.32,457 224.42,437 215.02,437"/><polygon points="221.34,457 230.74,457 242.84,437 233.44,437"/><polygon points="239.76,457 249.16,457 261.26,437 251.86,437"/><polygon points="258.18,457 267.58,457 279.68,437 270.28,437"/><polygon points="276.60,457 286.00,457 298.10,437 288.70,437"/><polygon points="295.02,457 304.42,457 316.52,437 307.12,437"/><polygon points="313.44,457 322.84,457 334.94,437 325.54,437"/><polygon points="331.86,457 341.26,457 353.36,437 343.96,437"/><polygon points="350.28,457 359.68,457 371.78,437 362.38,437"/><polygon points="368.70,457 378.10,457 390.20,437 380.80,437"/><polygon points="387.12,457 396.52,457 408.62,437 399.22,437"/><polygon points="405.54,457 414.94,457 427.04,437 417.64,437"/><polygon points="423.96,457 433.36,457 445.46,437 436.06,437"/><polygon points="442.38,457 451.78,457 463.88,437 454.48,437"/><polygon points="460.80,457 470.20,457 482.30,437 472.90,437"/><polygon points="479.22,457 488.62,457 500.72,437 491.32,437"/><polygon points="497.64,457 507.04,457 519.14,437 509.74,437"/><polygon points="516.06,457 525.46,457 537.56,437 528.16,437"/><polygon points="534.48,457 543.88,457 555.98,437 546.58,437"/><polygon points="552.90,457 562.30,457 574.40,437 565.00,437"/><polygon points="571.32,457 580.72,457 592.82,437 583.42,437"/><polygon points="589.74,457 599.14,457 611.24,437 601.84,437"/><polygon points="608.16,457 617.56,457 629.66,437 620.26,437"/><polygon points="626.58,457 635.98,457 648.08,437 638.68,437"/><polygon points="645.00,457 654.40,457 666.50,437 657.10,437"/><polygon points="663.42,457 672.82,457 684.92,437 675.52,437"/><polygon points="681.84,457 691.24,457 703.34,437 693.94,437"/><polygon points="700.26,457 709.66,457 721.76,437 712.36,437"/><polygon points="718.68,457 728.08,457 740.18,437 730.78,437"/><polygon points="737.10,457 746.50,457 758.60,437 749.20,437"/><polygon points="755.52,457 764.92,457 777.02,437 767.62,437"/><polygon points="773.94,457 783.34,457 795.44,437 786.04,437"/><polygon points="792.36,457 801.76,457 813.86,437 804.46,437"/></g>
<g fill="none" stroke="#fff" stroke-width="4.6"><circle cx="142.2" cy="101.7" r="27.5"/><circle cx="219.3" cy="101.7" r="27.5"/><circle cx="296.3" cy="101.7" r="27.5"/><circle cx="373.4" cy="101.7" r="27.5"/><circle cx="450.4" cy="101.7" r="27.5"/><circle cx="527.5" cy="101.7" r="27.5"/><circle cx="604.6" cy="101.7" r="27.5"/><circle cx="681.6" cy="101.7" r="27.5"/></g>
<g transform="translate(142.20,101.7) rotate(-24.5)"><path d="M-17,-3.5 H10.6 C12.2,-3.5 12.6,-1.4 13.8,-1.4 H14.6 V1.4 H13.8 C12.6,1.4 12.2,3.5 10.6,3.5 H-17 A3.2,3.2 0 0 1 -20.2,0.3 V-0.3 A3.2,3.2 0 0 1 -17,-3.5 Z" fill="none" stroke="#fff" stroke-width="1.9"/>
<rect x="14.8" y="-1.6" width="6.2" height="3.2" rx="1.6" fill="none" stroke="#fff" stroke-width="1.7"/></g>
<g transform="translate(219.26,101.7) "><path d="M0.2,-18.9 C-0.3,-17.6 -0.9,-16.6 -1.3,-15.8 C-1.7,-15 -1.8,-14.4 -1.7,-13.6 L-3.7,-13.3 C-3.4,-11.6 -3.6,-10.2 -3.9,-9 L-6.4,-8.8 C-6.1,-7.4 -6.3,-6 -6.6,-4.9 C-7.4,-4 -8.2,-3.4 -9.3,-3 C-8.6,-1.6 -8.5,-0.2 -8.4,1.2 C-8.3,2.6 -8,4 -7.7,5.3 C-7.5,6.6 -7.1,7.8 -6.6,8.7 C-6.3,9.6 -6,10.2 -5.6,10.8 L6.7,10.5 C7.2,9.4 7.5,8.4 7.7,7.4 C8.2,5.8 8.5,4.2 8.7,2.6 C8.8,0.6 9,-1.2 9.5,-3 C8.6,-3.8 8.1,-5 7.8,-6.3 C7.8,-7.8 7.6,-9.2 7.2,-10.3 L5.3,-9.9 C5.2,-11.2 4.9,-12.2 4.4,-13.1 L2.9,-13.2 C2.6,-14.4 2,-15.2 1.5,-15.8 C1,-16.8 0.6,-17.8 0.2,-18.9 Z" fill="#fff"/>
<path d="M-2.4,-3.4 L-1.9,-7 L-1.3,-3.6 Z M0.6,-4.6 L1.2,-8.6 L1.9,-4.2 Z M-5,-0.6 L-4.6,-3.4 L-4,-1.4Z M4.2,-2.6 L4.9,-4.6 L5.1,-2.2Z M6.6,-1 L7,-3 L7.4,-0.8Z" fill="#44546a"/>
<circle cx="0.5" cy="5.2" r="6.9" fill="#44546a" stroke="#fff" stroke-width="1.05"/>
<rect x="-9.3" y="12.3" width="18.9" height="1.5" fill="#fff"/></g>
<g transform="translate(296.32,101.7) "><g stroke-linecap="round" fill="none" transform="translate(0.3,7.2) scale(0.9) translate(0,-7.2)">
<path d="M-15,1.2 L15.2,13.2 M15.2,1.2 L-14.5,13.2" stroke="#fff" stroke-width="3.6"/>
<g fill="#fff"><circle cx="-16" cy="-0.6" r="2"/><circle cx="-17" cy="2.3" r="2"/><circle cx="16.3" cy="-0.6" r="2"/><circle cx="17.2" cy="2.3" r="2"/><circle cx="-15" cy="15.2" r="2"/><circle cx="-16.3" cy="12.3" r="2"/><circle cx="15.8" cy="15.2" r="2"/><circle cx="17" cy="12.3" r="2"/></g>
<path d="M-15,1.2 L15.2,13.2 M15.2,1.2 L-14.5,13.2" stroke="#44546a" stroke-width="1.7"/>
<g fill="#44546a"><circle cx="-16" cy="-0.6" r="1.05"/><circle cx="-17" cy="2.3" r="1.05"/><circle cx="16.3" cy="-0.6" r="1.05"/><circle cx="17.2" cy="2.3" r="1.05"/><circle cx="-15" cy="15.2" r="1.05"/><circle cx="-16.3" cy="12.3" r="1.05"/><circle cx="15.8" cy="15.2" r="1.05"/><circle cx="17" cy="12.3" r="1.05"/></g>
</g><path d="M0.3,-17.8 C7.4,-17.8 12.1,-14.6 12.1,-9.4 C12.1,-6.6 10.8,-4.6 9.6,-3.2 L9.4,0.8 C9.3,2.2 8,2.8 6.8,3.2 L6.4,8.6 C6,11.2 3.6,12.6 0.3,12.6 C-3,12.6 -5.4,11.2 -5.8,8.6 L-6.2,3.2 C-7.4,2.8 -8.7,2.2 -8.8,0.8 L-9,-3.2 C-10.2,-4.6 -11.5,-6.6 -11.5,-9.4 C-11.5,-14.6 -6.8,-17.8 0.3,-17.8 Z" fill="#44546a" stroke="#fff" stroke-width="1.15"/>
<path d="M-8.8,-13.6 C-9.8,-10.8 -9.4,-7 -8.2,-4.4 M9.4,-13.6 C10.4,-10.8 10,-7 8.8,-4.4" fill="none" stroke="#fff" stroke-width="0.8"/>
<path d="M-7,-3.8 C-6.6,-6 -3.4,-5.8 -1.6,-4.6 C-1.4,-2.4 -3,-0.9 -4.8,-0.7 C-6.4,-1.1 -7.2,-2.4 -7,-3.8 Z M7.6,-3.8 C7.2,-6 4,-5.8 2.2,-4.6 C2,-2.4 3.6,-0.9 5.4,-0.7 C7,-1.1 7.8,-2.4 7.6,-3.8 Z" fill="#fff"/>
<path d="M-1.6,0.2 h1.5 v4 h-1.5z M0.5,0.2 h1.5 v4 h-1.5z" fill="#fff"/>
<path d="M-4,5.8 H4.6 V8.8 H-4 Z" fill="#aeb5c0"/>
<path d="M-5,5.4 C-2.6,6.6 3.2,6.6 5.6,5.4 M-4.4,9.4 C-2,10.4 2.6,10.4 5,9.4" fill="none" stroke="#fff" stroke-width="0.8"/></g>
<g transform="translate(373.38,101.7) "><rect x="-11.7" y="-14.8" width="23.6" height="4.9" fill="#fff"/><path d="M-4.1,-10 H4.3 L0.5,7.2 H-0.3 Z" fill="#fff"/><circle cx="0.1" cy="17.1" r="3.1" fill="#fff"/></g>
<g transform="translate(450.44,101.7) "><g opacity="0.99"><text x="0.3" y="12.6" text-anchor="middle" font-family="DejaVu Sans, sans-serif" font-size="37.5" fill="#fff">&#9763;</text></g></g>
<g transform="translate(527.50,101.7) "><g fill="#fff" fill-opacity="0.28" stroke="#fff" stroke-width="1.05">
<path d="M-16,-13.5 L-3.2,-12.9 Q-1.2,-11.3 -3.2,-9.7 L-16,-9.1 Z"/>
<path d="M16,-13.7 L2.6,-13.2 Q0.5,-11.5 2.6,-9.8 L16,-8.9 Z"/>
</g>
<path d="M-16.1,-14.6 V-7.3 M16.2,-14.7 V-7.1" stroke="#fff" stroke-width="1.3"/>
<g fill="none" stroke="#fff" stroke-width="0.85" stroke-linecap="round">
<path d="M-22.6,0.6 q1.6,1.6 0.8,3.4 q-0.4,1.4 0.6,2.4 M-20.4,-0.6 q1.6,2 0.6,4 q-0.6,1.6 0.4,3 M-12.6,-0.6 q-1.6,1.8 -0.8,3.8 q0.6,1.6 -0.6,3 M-9,-1.6 q-2.2,1.8 -2,4.2 q0.2,1.8 -1.2,3.4"/>
<path d="M8,-5.6 q1.8,1.8 1.2,4 q-0.6,2 1,3.4 M11,-6.6 q1.8,2.2 1,4.6 q-0.6,1.8 0.6,3.2 M21,-7 q-2,2.2 -1.4,4.8 q0.4,1.8 -0.8,3.4 M23.4,-6 q-2.2,2 -1.8,4.4 q0.2,1.6 -1,3"/>
<circle cx="-17.1" cy="-2.4" r="1.2"/><circle cx="-17" cy="3.9" r="1.3"/><circle cx="15.8" cy="-4.1" r="1.3"/><circle cx="15.8" cy="1" r="1.3"/>
</g>
<path d="M-23.6,6.9 H-18.6 L-17,8 L-15.4,6.9 H-6.7 V11.1 H-23.6 Z" fill="#fff"/>
<path d="M3,6.6 C3.6,4.4 6,3.4 8.4,3 L12.6,2.6 L15.4,4.4 L12.6,5.4 L12.2,12.4 C9,12.6 5.6,12.4 4,11.2 C2.6,10 2.4,8.2 3,6.6 Z" fill="#fff"/>
<path d="M12.4,3.4 L16,4.6 L23.6,4.2 M9,12.3 C13,13 18,12.8 22.2,11.4" fill="none" stroke="#fff" stroke-width="1.3"/>
<path d="M3.6,6.3 H11.4 M3,8.2 H11.8 M3.4,10.1 H11.6" stroke="#44546a" stroke-width="0.7" fill="none"/></g>
<g transform="translate(604.56,101.7) "><clipPath id="rc"><rect x="2" y="-10" width="8.6" height="27"/></clipPath>
<g clip-path="url(#rc)"><text x="0" y="15.2" text-anchor="middle" font-family="DejaVu Serif, Liberation Serif, serif" font-weight="bold" font-size="33" fill="#fff" stroke="#fff" stroke-width="0.5" transform="translate(0.2,0) scale(0.8,1)">R</text></g>
<path d="M-9.2,-8.65 H-3.4 V-6.3 H-3.75 V10.8 H-2.8 V15.26 H-9.2 V10.8 H-7.85 V-6.3 H-9.2 Z" fill="#fff"/>
<rect x="-4.1" y="-4.2" width="7.5" height="1.8" rx="0.5" fill="#fff"/>
<path d="M-2.6,-2.4 V8.8 L-0.45,11 L1.7,8.8 V-2.4 Z" fill="#8e98a8" stroke="#fff" stroke-width="0.9"/>
<path d="M-1.9,-2.2 L-0.45,-0.6 L1,-2.2 Z" fill="#44546a"/>
<g fill="#fff"><circle cx="-2.2" cy="-6.6" r="0.75"/><circle cx="0.6" cy="-7" r="0.75"/><circle cx="-0.8" cy="-5.4" r="0.6"/><circle cx="-2.4" cy="-8.2" r="0.55"/><circle cx="1.2" cy="-5.2" r="0.55"/></g>
<g stroke="#fff" stroke-width="1.2" stroke-linecap="round"><path d="M-0.2,-10.6 V-18 M-2.4,-10.6 L-5,-16.6 M1.8,-10.6 L4.1,-16.6 M-4.6,-10 L-8,-14.4 M4.1,-10 L7.1,-14.4"/></g>
<g stroke="#fff" stroke-width="0.8" stroke-linecap="round"><path d="M-1.4,-10.8 L-3,-15.8 M0.9,-10.8 L2,-15.8"/></g></g>
<g transform="translate(681.62,101.7) "><path d="M-1.5,-16 C-1.8,-14.6 -2.4,-13.4 -2.9,-12.4 C-3.3,-11.4 -3.7,-10.6 -4.1,-9.8 L-5.4,-11 C-5.6,-9.2 -6.1,-7.6 -6.6,-6.3 C-7.1,-5.4 -7.7,-4.8 -8.5,-4.6 C-8.3,-3.2 -8.5,-2 -8.8,-0.8 C-9.2,-0.2 -9.6,0.2 -10.3,0.3 C-10.8,2 -10.8,3.6 -10.4,5.2 C-10.3,6.6 -10,7.8 -9.6,8.9 C-9,10 -8.2,10.7 -7.2,11 C-6.2,11.4 -5.2,11.5 -4.1,11.5 C-5,10.8 -5.6,9.9 -5.9,8.9 C-6.5,7.9 -6.7,6.9 -6.6,5.8 C-6.4,4.7 -6,3.7 -5.3,2.8 L-4.5,4.8 C-4.4,3.6 -4.1,2.5 -3.5,1.6 L-2.7,3.6 C-2.6,1.9 -2.2,0.4 -1.5,-0.9 C-0.8,0 -0.3,1 0.1,2.2 L1.3,0.8 C2.2,1.7 2.8,2.8 3.2,4 C4,4.9 4.5,5.9 4.6,7 C4.7,8.1 4.4,9.1 3.8,10 C3.5,10.6 3.1,11.1 2.5,11.5 L3.2,11.5 C4.3,11.5 5.3,11.4 6.2,11 C7.2,10.6 8,9.9 8.6,8.9 C9.3,7.8 9.7,6.6 9.8,5.2 C9.9,4 9.8,2.8 9.5,1.6 C9.4,-0.2 9.1,-2.1 8.6,-4 L6.8,-3.2 C6.7,-4.1 6.5,-4.9 6.2,-5.7 C5.9,-7.2 5.4,-8.7 4.6,-10.1 L3.2,-8.6 C2.5,-9.2 1.8,-9.9 1.3,-10.6 C0.7,-11.5 0.3,-12.5 0.1,-13.6 C-0.3,-14.5 -0.8,-15.3 -1.5,-16 Z" fill="#fff"/>
<rect x="-9.6" y="12.5" width="19.1" height="2.7" fill="#fff"/></g>
</svg>
<div class="t" id="whmis" style="will-change:transform;left:0;top:175.7px;font-size:95px;line-height:95px;color:#fdb515;width:813px;height:95px;-webkit-text-stroke:0.7px #fdb515"><span style="left:261.33px;transform:scaleX(0.869)">W</span><span style="left:340.65px;transform:scaleX(0.894)">H</span><span style="left:402.55px;transform:scaleX(1.006)">M</span><span style="left:481.40px;transform:scaleX(0.956)">I</span><span style="left:502.81px;transform:scaleX(0.937)">S</span></div>
<div class="t" style="left:188.8px;top:283px;font-size:18.05px;line-height:22px;color:#fff;font-weight:bold;font-style:italic;will-change:transform;transform-origin:0 17px;transform:scaleY(1.05)">Workplace Hazardous Materials Information System</div>
</div>
<!-- STATUS -->
<div class="a" id="status"></div>
<div class="t w" style="left:460.2px;top:12.5px;letter-spacing:-0.16px;">whmis_20889.pptx - PowerPoint</div>
<div class="t w" style="left:20.8px;top:40.5px;letter-spacing:-0.27px;">File</div>
<div class="t " style="left:76.6px;top:40.8px;letter-spacing:0.13px;color:#d04727;font-size:12.6px">Home</div>
<div class="t w" style="left:138.4px;top:40.5px;letter-spacing:-0.06px;">Insert</div>
<div class="t w" style="left:196.6px;top:40.5px;letter-spacing:-0.16px;">Design</div>
<div class="t w" style="left:262.3px;top:40.5px;letter-spacing:-0.05px;">Transitions</div>
<div class="t w" style="left:349.6px;top:40.5px;letter-spacing:0.12px;">Animations</div>
<div class="t w" style="left:438.4px;top:40.5px;letter-spacing:-0.28px;">Slide Show</div>
<div class="t w" style="left:524.4px;top:40.5px;letter-spacing:-0.26px;">Review</div>
<div class="t w" style="left:591.4px;top:40.5px;letter-spacing:-0.57px;">View</div>
<div class="t w" style="left:644.5px;top:40.7px;letter-spacing:0.25px;font-size:12.5px">Mix</div>
<div class="t w" style="left:692.5px;top:40.5px;letter-spacing:-0.27px;">LiveSlides</div>
<div class="t w" style="left:790.7px;top:40.5px;letter-spacing:-0.02px;">Tell me...</div>
<div class="t w" style="left:930.5px;top:40.5px;letter-spacing:-0.23px;">Farshad Iqbal</div>
<div class="t w" style="left:1036.4px;top:40.5px;letter-spacing:-0.45px;">Share</div>
<div class="t d" style="left:11.5px;top:101.7px;letter-spacing:-0.45px;">Paste</div>
<div class="t g" style="left:9.5px;top:136.5px;letter-spacing:0.0px;">Clipboard</div>
<div class="t k" style="left:99.2px;top:101.7px;letter-spacing:0.4px;">New</div>
<div class="t k" style="left:93.8px;top:117.4px;letter-spacing:0.3px;">Slide</div>
<div class="t k" style="left:154.2px;top:68.0px;letter-spacing:0.06px;">Layout</div>
<div class="t k" style="left:154.2px;top:90.6px;letter-spacing:-0.67px;">Reset</div>
<div class="t k" style="left:154.2px;top:113.8px;letter-spacing:0.05px;">Section</div>
<div class="t g" style="left:134.0px;top:136.5px;letter-spacing:-0.26px;">Slides</div>
<div class="t g" style="left:306.4px;top:136.5px;letter-spacing:0.2px;">Font</div>
<div class="t g" style="left:502.7px;top:136.5px;letter-spacing:-0.27px;">Paragraph</div>
<div class="t k" style="left:640.0px;top:101.7px;letter-spacing:-0.44px;">Shapes</div>
<div class="t k" style="left:683.4px;top:101.7px;letter-spacing:-0.07px;">Arrange</div>
<div class="t d" style="left:733.2px;top:101.7px;letter-spacing:0.12px;">Quick</div>
<div class="t d" style="left:729.2px;top:117.4px;letter-spacing:-0.24px;">Styles</div>
<div class="t d" style="left:792.1px;top:67.7px;letter-spacing:-0.28px;">Shape Fill</div>
<div class="t d" style="left:792.1px;top:90.9px;letter-spacing:-0.08px;">Shape Outline</div>
<div class="t d" style="left:792.1px;top:113.4px;letter-spacing:-0.26px;">Shape Effects</div>
<div class="t g" style="left:728.8px;top:136.5px;letter-spacing:0.15px;">Drawing</div>
<div class="t k" style="left:910.3px;top:67.5px;letter-spacing:0.2px;">Find</div>
<div class="t k" style="left:910.3px;top:91.0px;letter-spacing:-0.22px;">Replace</div>
<div class="t k" style="left:910.3px;top:113.5px;letter-spacing:-0.26px;">Select</div>
<div class="t g" style="left:911.5px;top:137.0px;letter-spacing:0.18px;">Editing</div>
<div class="t g" style="left:7.2px;top:639.7px;letter-spacing:-0.22px;">Slide 1 of 13</div>
<div class="t g" style="left:589.5px;top:640.0px;letter-spacing:-0.32px;">Notes</div>
<div class="t g" style="left:656.8px;top:640.0px;letter-spacing:-0.6px;">Comments</div>
<div class="t g" style="left:1023.5px;top:639.5px;letter-spacing:-1.25px;">64%</div>
<svg width="1091" height="659" viewBox="0 0 1091 659" style="left:0;top:0"><rect x="23" y="9" width="14" height="14" rx="0.8" fill="#fff"/><rect x="25" y="10.4" width="10.4" height="5" fill="#b7472a"/><rect x="26.2" y="18.2" width="8" height="4.8" fill="#b7472a"/><rect x="29" y="19.6" width="2.6" height="3.4" fill="#fff"/>
<path d="M57.5,9.6 L52.6,14.3 L57.5,18.6 M53,14.2 H60.5 C64,14.2 66,16 65.6,18.4 C65.2,20.2 63.6,21.2 61.4,21.4" fill="none" stroke="#d08069" stroke-width="1.8"/>
<path d="M72.3,14 h4.6 l-2.3,2.6 z" fill="#d08069"/>
<path d="M96.4,10.8 A5.6,5.6 0 1 0 99.2,15.8" fill="none" stroke="#d08069" stroke-width="1.8"/><path d="M95,9.4 H99.4 V14" fill="none" stroke="#d08069" stroke-width="1.8"/>
<path d="M114.6,9.4 H131.4" stroke="#fff" stroke-width="1.5"/><path d="M117.5,10 V19.5 H122.5 M121.5,19.5 V22.6 M118.5,23.5 H128 M121.8,22.8 L124.5,20.2" fill="none" stroke="#fff" stroke-width="1"/><circle cx="126.6" cy="15.6" r="4.4" fill="none" stroke="#fff" stroke-width="1"/><path d="M125.2,13.2 L129,15.6 L125.2,18 Z" fill="#fff"/>
<path d="M148.6,15 H154.4" stroke="#fff" stroke-width="1.3"/>
<path d="M148.6,17.6 h5.8 l-2.9,3.2 z" fill="#fff"/>
<rect x="922.5" y="11.5" width="12" height="9" fill="none" stroke="#fff"/><rect x="922" y="11" width="13" height="2.4" fill="#fff"/><path d="M928.5,19 V15 M926.3,17 L928.5,14.8 L930.7,17" fill="none" stroke="#fff"/>
<path d="M970,16.5 H980" stroke="#fff"/><rect x="1016.5" y="11.5" width="9" height="9" fill="none" stroke="#fff"/><path d="M1062,11 L1072,21 M1072,11 L1062,21" stroke="#fff" stroke-width="1.1"/>
<path d="M776.2,50.4 C776.2,48.6 774,47.6 774,44.8 A4.3,4.3 0 0 1 782.6,44.8 C782.6,47.6 780.4,48.6 780.4,50.4 Z" fill="none" stroke="#fff" stroke-width="1"/><path d="M776,51.6 H780.6 M776.4,53.4 H780.2" stroke="#fff" stroke-width="1"/>
<circle cx="1025" cy="44.6" r="3.4" fill="none" stroke="#fff" stroke-width="1.3"/><path d="M1018.6,55.4 C1018.6,51 1021,48.6 1025,48.6 C1026.8,48.6 1028,49.2 1029,50" fill="none" stroke="#fff" stroke-width="1.3"/><path d="M1030.2,50.4 V56 M1027.4,53.2 H1033" stroke="#fff" stroke-width="1.2"/>
<rect x="14" y="70.5" width="24" height="26" rx="1" fill="#dcd8dc"/><rect x="21" y="68" width="10" height="5" rx="1" fill="#b4b0b4"/><rect x="19" y="71.5" width="14" height="3" fill="#b4b0b4"/>
<path d="M27.5,80.5 H37 L41.5,85 V97.5 H27.5 Z" fill="#f4f2f4" stroke="#b4b0b4" stroke-width="1"/><path d="M37,80.5 V85 H41.5" fill="none" stroke="#b4b0b4"/>
<path d="M22.8,123.4 h4.6 l-2.3,2.6 z" fill="#b4b0b4"/>
<path d="M53.5,66.5 L61,78 M63,66.5 L55.5,78" stroke="#b4b0b4" stroke-width="1.4"/><circle cx="54.2" cy="79.4" r="2.5" fill="none" stroke="#b4b0b4" stroke-width="1.2"/><circle cx="62.2" cy="79.4" r="2.5" fill="none" stroke="#b4b0b4" stroke-width="1.2"/>
<path d="M50.5,90.5 H56 L58.5,93 V100.5 H50.5 Z" fill="#f4f2f4" stroke="#b4b0b4"/><path d="M56.5,94.5 H61.5 L64.5,97.5 V104.5 H56.5 Z" fill="#f4f2f4" stroke="#b4b0b4"/><path d="M52,94 H55 M52,96.5 H55 M58.5,98.5 H62.5 M58.5,101 H62.5" stroke="#b4b0b4" stroke-width="0.8"/>
<path d="M71.8,96.4 h4.6 l-2.3,2.6 z" fill="#b4b0b4"/>
<path d="M60.5,114.5 L65.5,118.5 L62.5,122 L57.5,118 Z" fill="#b4b0b4"/><path d="M57,118.6 L61.6,122.6 L55,127 L51,124.6 Z" fill="#dcd8dc" stroke="#b4b0b4" stroke-width="0.6"/>
<path d="M75.5,147.0 V141.5 H81.0" fill="none" stroke="#b4b0b4"/><path d="M78.0,144.0 L81.8,147.8 M82.0,144.7 V148.0 H78.7" fill="none" stroke="#b4b0b4" stroke-width="0.9"/>
<rect x="98.5" y="70.5" width="27" height="21" rx="1.5" fill="#fff" stroke="#8a8a8a"/><rect x="103" y="74" width="18" height="5.5" fill="#c8c8c8"/><path d="M103,83.5 H105 M107,83.5 H121 M103,87.5 H105 M107,87.5 H121" stroke="#9a9a9a"/>
<g stroke="#e8a838" stroke-width="1.5"><path d="M101.5,65.5 V78 M95.4,71.7 H107.6 M97.2,67.4 L105.8,76 M105.8,67.4 L97.2,76"/></g><circle cx="101.5" cy="71.7" r="2.6" fill="#fff" stroke="#e8a838" stroke-width="1"/>
<path d="M123,122 h5 l-2.5,2.8 z" fill="#6a6a6a"/>
<rect x="136.5" y="67.5" width="15" height="13" fill="#fff" stroke="#6a6a6a"/><path d="M139,70.5 H149" stroke="#6a6a6a" stroke-width="1.4"/><rect x="139" y="73" width="4" height="5.4" fill="#9a9a9a"/><path d="M144.6,73.6 H149 M144.6,75.6 H149 M144.6,77.6 H149" stroke="#8a8a8a" stroke-width="0.9"/>
<path d="M193.6,73 h5 l-2.5,2.8 z" fill="#6a6a6a"/>
<rect x="138.5" y="93.5" width="13" height="9.5" fill="#fff" stroke="#6a6a6a"/><rect x="141" y="96" width="5" height="2.6" fill="#9a9a9a"/><path d="M141,100.6 H149" stroke="#9a9a9a" stroke-width="0.9"/><path d="M137,96.6 C137.4,92.6 141,90.4 145,92.4" fill="none" stroke="#3c74ba" stroke-width="1.4"/><path d="M135.4,93.6 L137,97.6 L140.4,95.4 Z" fill="#3c74ba"/>
<path d="M142,114.5 H151.5 V118 H142" fill="none" stroke="#e0703c" stroke-width="1.2"/><rect x="142.5" y="121.5" width="9" height="6" fill="#fff" stroke="#6a6a6a"/><path d="M144.6,124.5 H149.6" stroke="#9a9a9a"/><g stroke="#e8a838" stroke-width="1"><path d="M138.6,112.4 V119 M135.4,115.7 H141.8 M136.3,113.4 L140.9,118 M140.9,113.4 L136.3,118"/></g>
<path d="M197.2,119 h5 l-2.5,2.8 z" fill="#6a6a6a"/>
<path d="M306,81 h5 l-2.5,2.8 z" fill="#b4b0b4"/>
<path d="M352,81 h5 l-2.5,2.8 z" fill="#b4b0b4"/>
<path d="M351,111.6 h4.6 l-2.3,2.6 z" fill="#b4b0b4"/>
<path d="M384,111.6 h4.6 l-2.3,2.6 z" fill="#b4b0b4"/>
<path d="M428,111.6 h4.6 l-2.3,2.6 z" fill="#b4b0b4"/>
<path d="M378,75 l2,2.6 h-4z M400.5,77.8 l2.2,-2.8 h-4.4z" fill="#b4b0b4"/>
<path d="M331.5,118.5 H346.5 M334,116.4 L331.6,118.5 L334,120.6 M344,116.4 L346.4,118.5 L344,120.6" fill="none" stroke="#b4b0b4"/>
<path d="M268,120.5 H277.5" stroke="#b4b0b4" stroke-width="1.1"/><path d="M308.5,114.5 H325.5" stroke="#b4b0b4"/>
<path d="M424,86 L430,79.6 L434.6,83.6 L428.6,90 Z" fill="#dcd8dc" stroke="#b4b0b4" stroke-width="0.7"/>
<path d="M430,147.0 V141.5 H435.5" fill="none" stroke="#b4b0b4"/><path d="M432.5,144.0 L436.3,147.8 M436.5,144.7 V148.0 H433.2" fill="none" stroke="#b4b0b4" stroke-width="0.9"/>
<circle cx="450.5" cy="75.5" r="1.3" fill="#b4b0b4"/>
<circle cx="450.5" cy="81.5" r="1.3" fill="#b4b0b4"/>
<circle cx="450.5" cy="87.5" r="1.3" fill="#b4b0b4"/>
<path d="M454,75.5 h9.5" stroke="#b4b0b4" stroke-width="1"/>
<path d="M454,81.5 h9.5" stroke="#b4b0b4" stroke-width="1"/>
<path d="M454,87.5 h9.5" stroke="#b4b0b4" stroke-width="1"/>
<path d="M470.6,80.4 h4.8 l-2.4,2.7 z" fill="#b4b0b4"/>
<path d="M489,75.5 h9.5" stroke="#b4b0b4" stroke-width="1"/>
<path d="M489,81.5 h9.5" stroke="#b4b0b4" stroke-width="1"/>
<path d="M489,87.5 h9.5" stroke="#b4b0b4" stroke-width="1"/>
<g fill="#b4b0b4" font-family="Liberation Sans,sans-serif" font-size="5.5"><text x="483.2" y="77.4">1</text><text x="483.2" y="83.4">2</text><text x="483.2" y="89.4">3</text></g>
<path d="M505.4,80.4 h4.8 l-2.4,2.7 z" fill="#b4b0b4"/>
<path d="M520,75.5 h16" stroke="#b4b0b4" stroke-width="1"/>
<path d="M520,88.5 h16" stroke="#b4b0b4" stroke-width="1"/>
<path d="M527.5,79.8 h8.5" stroke="#b4b0b4" stroke-width="1"/>
<path d="M527.5,84.2 h8.5" stroke="#b4b0b4" stroke-width="1"/>
<path d="M520.4,82 H526 M522.6,79.8 L520.4,82 L522.6,84.2" fill="none" stroke="#b4b0b4"/>
<path d="M542,75.5 h16" stroke="#b4b0b4" stroke-width="1"/>
<path d="M542,88.5 h16" stroke="#b4b0b4" stroke-width="1"/>
<path d="M549.5,79.8 h8.5" stroke="#b4b0b4" stroke-width="1"/>
<path d="M549.5,84.2 h8.5" stroke="#b4b0b4" stroke-width="1"/>
<path d="M542,82 H547.6 M545.4,79.8 L547.6,82 L545.4,84.2" fill="none" stroke="#b4b0b4"/>
<path d="M572.5,76.5 h9.5" stroke="#b4b0b4" stroke-width="1"/>
<path d="M572.5,80.5 h9.5" stroke="#b4b0b4" stroke-width="1"/>
<path d="M572.5,84.5 h9.5" stroke="#b4b0b4" stroke-width="1"/>
<path d="M572.5,88.5 h9.5" stroke="#b4b0b4" stroke-width="1"/>
<path d="M569,75 V89.4 M566.8,77.2 L569,75 L571.2,77.2 M566.8,87.2 L569,89.4 L571.2,87.2" fill="none" stroke="#b4b0b4"/>
<path d="M587,80.4 h4.8 l-2.4,2.7 z" fill="#b4b0b4"/>
<path d="M601.5,66.5 V81 M604.5,66.5 V81 M599.8,78.8 L601.5,81 L603.2,78.8 M602.8,78.8 L604.5,81 L606.2,78.8 M609.5,76 V81 M613.5,76 V81 M607.8,78.8 L609.5,81 L611.2,78.8 M611.8,78.8 L613.5,81 L615.2,78.8" fill="none" stroke="#b4b0b4" stroke-width="0.9"/>
<text x="607.6" y="74.4" font-family="Liberation Sans,sans-serif" font-size="10.5" fill="#b4b0b4">A</text>
<path d="M620.2,73 h4.8 l-2.4,2.7 z" fill="#b4b0b4"/>
<path d="M603,91.5 H600.5 V104.5 H603 M613,91.5 H615.5 V104.5 H613" fill="none" stroke="#b4b0b4"/><path d="M608,89.5 V94 M606,91.4 L608,89.4 L610,91.4 M608,106 V101.6 M606,104.2 L608,106.2 L610,104.2" fill="none" stroke="#b4b0b4"/>
<path d="M603.5,95.5 h9" stroke="#b4b0b4" stroke-width="0.8"/>
<path d="M603.5,97.8 h9" stroke="#b4b0b4" stroke-width="0.8"/>
<path d="M603.5,100 h9" stroke="#b4b0b4" stroke-width="0.8"/>
<path d="M620.2,96 h4.8 l-2.4,2.7 z" fill="#b4b0b4"/>
<path d="M600,112.4 H611.4 L614.6,116.4 H603.4 Z" fill="#b4b0b4"/><path d="M600.4,119.4 L605.4,116.6 V122.2 Z" fill="#b4b0b4"/><rect x="606.5" y="118.5" width="9" height="9" fill="#f4f2f4" stroke="#b4b0b4"/><path d="M608.4,121.5 h1 M610.6,121.5 h3 M608.4,124.5 h1 M610.6,124.5 h3" stroke="#b4b0b4"/>
<path d="M620.2,119 h4.8 l-2.4,2.7 z" fill="#b4b0b4"/>
<path d="M449.5,108.5 h14" stroke="#b4b0b4" stroke-width="1"/>
<path d="M449.5,114.5 h14" stroke="#b4b0b4" stroke-width="1"/>
<path d="M449.5,111.5 h10" stroke="#b4b0b4" stroke-width="1"/>
<path d="M449.5,117.5 h10" stroke="#b4b0b4" stroke-width="1"/>
<path d="M471.5,108.5 h14" stroke="#b4b0b4" stroke-width="1"/>
<path d="M471.5,114.5 h14" stroke="#b4b0b4" stroke-width="1"/>
<path d="M473.5,111.5 h10" stroke="#b4b0b4" stroke-width="1"/>
<path d="M473.5,117.5 h10" stroke="#b4b0b4" stroke-width="1"/>
<path d="M494,108.5 h14" stroke="#b4b0b4" stroke-width="1"/>
<path d="M494,114.5 h14" stroke="#b4b0b4" stroke-width="1"/>
<path d="M498,111.5 h10" stroke="#b4b0b4" stroke-width="1"/>
<path d="M498,117.5 h10" stroke="#b4b0b4" stroke-width="1"/>
<path d="M516,108.5 h14" stroke="#b4b0b4" stroke-width="1"/>
<path d="M516,111.5 h14" stroke="#b4b0b4" stroke-width="1"/>
<path d="M516,114.5 h14" stroke="#b4b0b4" stroke-width="1"/>
<path d="M516,117.5 h14" stroke="#b4b0b4" stroke-width="1"/>
<path d="M546.5,108.5 h6" stroke="#b4b0b4" stroke-width="1"/>
<path d="M546.5,111.5 h6" stroke="#b4b0b4" stroke-width="1"/>
<path d="M546.5,114.5 h6" stroke="#b4b0b4" stroke-width="1"/>
<path d="M546.5,117.5 h6" stroke="#b4b0b4" stroke-width="1"/>
<path d="M554,108.5 h6" stroke="#b4b0b4" stroke-width="1"/>
<path d="M554,111.5 h6" stroke="#b4b0b4" stroke-width="1"/>
<path d="M554,114.5 h6" stroke="#b4b0b4" stroke-width="1"/>
<path d="M554,117.5 h6" stroke="#b4b0b4" stroke-width="1"/>
<path d="M565.8,111.6 h4.8 l-2.4,2.7 z" fill="#b4b0b4"/>
<path d="M622.6,147.0 V141.5 H628.1" fill="none" stroke="#b4b0b4"/><path d="M625.1,144.0 L628.9,147.8 M629.1,144.7 V148.0 H625.8000000000001" fill="none" stroke="#b4b0b4" stroke-width="0.9"/>
<circle cx="665.4" cy="75.8" r="8.6" fill="#fff" stroke="#3c74ba" stroke-width="1.1"/><rect x="645.5" y="72.5" width="16" height="16" fill="#fff" stroke="#3c74ba" stroke-width="1.1"/><path d="M658.6,79.6 L668,88.4 L658.6,97 L649.4,88.4 Z" fill="#fff" stroke="#3c74ba" stroke-width="1.1"/>
<path d="M657.2,123.4 h4.8 l-2.4,2.7 z" fill="#6a6a6a"/>
<rect x="694" y="72" width="19" height="19" fill="#edc87e"/><rect x="690.5" y="68.5" width="11.5" height="11.5" fill="#fff" stroke="#7a7a7a"/><rect x="705.5" y="83.5" width="11.5" height="11.5" fill="#fff" stroke="#7a7a7a"/>
<path d="M701.8,123.4 h4.8 l-2.4,2.7 z" fill="#6a6a6a"/>
<rect x="736.5" y="69.5" width="25" height="25" rx="5.5" fill="#f0ecf0" stroke="#b4b0b4" stroke-width="1"/><path d="M764.6,76.4 L754.4,90 L752.6,88.4 Z" fill="#b4b0b4"/><path d="M753.4,89 C750.6,88.2 748.4,90.4 747.6,93 C746.8,95 744.4,96.6 742.6,96.8 C746.6,98 752.6,97.4 754.6,93.6 C755.4,91.8 755,90.2 753.4,89 Z" fill="#b4b0b4"/>
<path d="M763,122 h4.8 l-2.4,2.7 z" fill="#b4b0b4"/>
<path d="M776.4,73.6 L781.4,68.6 L787.4,74.4 L782,79.6 Z" fill="#f4f2f4" stroke="#b4b0b4" stroke-width="0.9"/><path d="M781.4,68.8 L779.6,66.4" stroke="#b4b0b4"/><path d="M788.6,74.4 c1,1.6 1.8,2.6 1.8,3.6 a1.6,1.6 0 0 1 -3.2,0 c0,-1 0.6,-2 1.4,-3.6z" fill="#b4b0b4"/><rect x="774" y="80" width="16" height="2.6" fill="#e2dde2"/>
<path d="M846,73.4 h4.6 l-2.3,2.6 z" fill="#b4b0b4"/>
<path d="M785.4,90.4 H774.5 V102.5 H786.5 V98.4" fill="none" stroke="#b4b0b4"/><path d="M779.4,98.6 L780.4,95.4 L788,88.2 L790.2,90.4 L782.6,97.6 Z" fill="#b4b0b4"/>
<path d="M870,96.4 h4.6 l-2.3,2.6 z" fill="#b4b0b4"/>
<path d="M776.4,113.6 H788.6 L785.6,122.6 H774 Z" fill="#f4f2f4" stroke="#b4b0b4" stroke-width="1"/><path d="M774.4,123.4 H786.4 L789.4,114.6 L790.4,116 L787.6,125 H775.6 Z" fill="#b4b0b4"/>
<path d="M866,119.4 h4.6 l-2.3,2.6 z" fill="#b4b0b4"/>
<path d="M873.4,147.0 V141.5 H878.9" fill="none" stroke="#b4b0b4"/><path d="M875.9,144.0 L879.6999999999999,147.8 M879.9,144.7 V148.0 H876.6" fill="none" stroke="#b4b0b4" stroke-width="0.9"/>
<circle cx="901.4" cy="72.6" r="4.2" fill="none" stroke="#3c74ba" stroke-width="1.6"/><path d="M898.4,75.8 L893.4,80.4" stroke="#3c74ba" stroke-width="2.2"/>
<g font-family="Liberation Sans,sans-serif" font-size="9.5" font-weight="bold"><text x="892" y="96" fill="#555">a</text><text x="897.4" y="96" fill="#8e3fa8">b</text><text x="897" y="104.4" fill="#555">a</text><text x="902.4" y="104.4" fill="#3c74ba">c</text></g><path d="M893.4,98 V101.6 H896 M894.6,100.2 L896.2,101.6 L894.6,103" fill="none" stroke="#3c74ba" stroke-width="0.9"/>
<path d="M962,96 h5 l-2.5,2.8 z" fill="#6a6a6a"/>
<path d="M896.5,112.6 V124.8 L899.6,122 L901.8,126.8 L903.4,126 L901.2,121.4 H905 Z" fill="#fff" stroke="#555" stroke-width="0.9"/>
<path d="M944.6,119.4 h4.8 l-2.4,2.7 z" fill="#6a6a6a"/>
<path d="M1071,146.6 L1075.6,142 L1080.2,146.6" fill="none" stroke="#6a6a6a" stroke-width="1.4"/>
<rect x="730.5" y="637" width="37.3" height="21" fill="#c9c9c9"/>
<path d="M98.5,642.5 C96,640.6 93.6,640.6 91.7,641.4 V650.6 C93.6,649.8 96,649.8 98.5,651.8 C100.6,649.8 102.6,649.8 104.6,650.4 V647.4 M98.5,642.5 V651.8 M98.5,642.5 C99.6,641.4 100.8,641 102,640.9" fill="none" stroke="#6a6a6a" stroke-width="1"/><path d="M100.8,648 L101.4,645.6 L105.2,641.2 L106.6,642.4 L102.8,646.8 Z" fill="#f1f1f1" stroke="#6a6a6a" stroke-width="0.8"/>
<path d="M574,646.5 H584.6 M574,649 H584.6 M574,651.5 H581" stroke="#6a6a6a" stroke-width="1"/><path d="M577,644.2 h4.6 l-2.3,-3.4z" fill="#6a6a6a"/>
<path d="M641,641.6 H653 V649.6 H647.6 L644.6,652.8 V649.6 H641 Z" fill="#7a7a7a"/>
<rect x="742.5" y="641" width="13" height="11.4" fill="none" stroke="#6a6a6a" stroke-width="1"/><path d="M742.5,644 H755.5 M746,644 V652.4" stroke="#6a6a6a" stroke-width="1"/><rect x="747.6" y="645.6" width="6.4" height="4.4" fill="none" stroke="#6a6a6a" stroke-width="0.9"/>
<rect x="780.5" y="641" width="5" height="4.4" fill="none" stroke="#6a6a6a" stroke-width="1"/>
<rect x="788.5" y="641" width="5" height="4.4" fill="none" stroke="#6a6a6a" stroke-width="1"/>
<rect x="780.5" y="648" width="5" height="4.4" fill="none" stroke="#6a6a6a" stroke-width="1"/>
<rect x="788.5" y="648" width="5" height="4.4" fill="none" stroke="#6a6a6a" stroke-width="1"/>
<path d="M824.6,642.6 C822.6,641 820.4,641 818.6,641.6 V651.4 C820.4,650.8 822.6,650.8 824.6,652.4 C826.6,650.8 828.8,650.8 830.6,651.4 V641.6 C828.8,641 826.6,641 824.6,642.6 Z M824.6,642.6 V652.4" fill="none" stroke="#6a6a6a" stroke-width="1"/><path d="M820,644 h3 M820,646 h3 M820,648 h3 M826.2,644 h3 M826.2,646 h3 M826.2,648 h3" stroke="#6a6a6a" stroke-width="0.7"/>
<path d="M856,641.7 H869.6" stroke="#6a6a6a" stroke-width="1.4"/><path d="M857.5,642 V648.5 H868 V642 M862.8,648.5 V652 M859.4,652.6 H866.2" fill="none" stroke="#6a6a6a" stroke-width="1"/>
<path d="M886.4,647.2 H893" stroke="#6a6a6a" stroke-width="1.6"/><path d="M897,647.5 H997" stroke="#8a8a8a" stroke-width="0.9"/><path d="M947.5,644 V650.6" stroke="#8a8a8a" stroke-width="0.9"/><rect x="926.2" y="641.2" width="3.4" height="10.6" fill="#6a6a6a"/><path d="M1001,647.2 H1009 M1005,643.2 V651.2" stroke="#6a6a6a" stroke-width="1.6"/>
<rect x="1059" y="641.6" width="12.6" height="11.8" fill="none" stroke="#6a6a6a" stroke-width="1"/><path d="M1065.3,643.6 V646.2 M1065.3,648.8 V651.4 M1061,647.5 H1063.6 M1067,647.5 H1069.6 M1064.3,644.8 L1065.3,643.6 L1066.3,644.8 M1064.3,650.2 L1065.3,651.4 L1066.3,650.2 M1062.2,646.5 L1061,647.5 L1062.2,648.5 M1068.4,646.5 L1069.6,647.5 L1068.4,648.5" fill="none" stroke="#6a6a6a" stroke-width="0.8"/></svg>
</body></html>
